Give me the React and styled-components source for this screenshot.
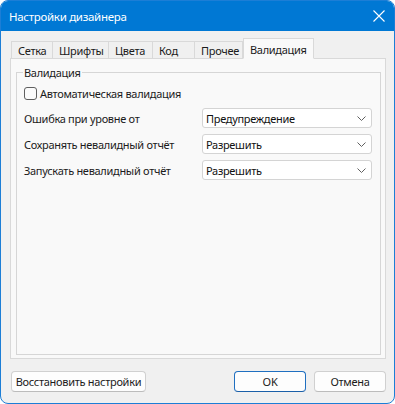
import React from 'react';
import styled, { createGlobalStyle } from 'styled-components';

const GlobalStyle = createGlobalStyle`
  html, body {
    margin: 0;
    padding: 0;
    background: #ffffff;
  }
  body {
    font-family: "Noto Sans", "Open Sans", sans-serif;
    font-size: 11px;
    letter-spacing: -0.3px;
    color: #1b1b1b;
  }
`;

const Window = styled.div`
  box-sizing: border-box;
  width: 395px;
  height: 404px;
  border: 1px solid #1c7ed6;
  border-radius: 8px;
  overflow: hidden;
  background: #f0f0f0;
  display: flex;
  flex-direction: column;
`;

const TitleBar = styled.div`
  height: 30px;
  flex: none;
  background: #0078d4;
  color: #ffffff;
  display: flex;
  align-items: center;
  justify-content: space-between;
  padding: 0 9px 0 8px;
  font-size: 11.5px;
`;

const CloseIcon = () => (
  <svg width="12" height="12" viewBox="0 0 12 12">
    <path d="M0.5 0.5 L11.5 11.5 M11.5 0.5 L0.5 11.5" stroke="#ffffff" strokeWidth="1.1" fill="none" />
  </svg>
);

const Body = styled.div`
  flex: 1;
  display: flex;
  flex-direction: column;
  padding: 8px 8px 0 9px;
`;

const TabStrip = styled.div`
  display: flex;
  align-items: flex-end;
  height: 20px;
  padding-left: 1px;
  position: relative;
  z-index: 1;
  margin-bottom: -1px;
`;

const Tab = styled.div`
  box-sizing: border-box;
  width: ${p => p.w}px;
  height: ${p => (p.active ? 21 : 18)}px;
  margin: ${p => (p.active ? '0 -2px 0 0' : '0')};
  padding-left: 6px;
  padding-top: ${p => (p.active ? 2 : 0)}px;
  display: flex;
  align-items: center;
  background: ${p => (p.active ? '#f9f9f9' : '#f0f0f0')};
  border: 1px solid #d9d9d9;
  border-left-width: ${p => (p.first || p.active ? 1 : 0)}px;
  border-bottom-color: ${p => (p.active ? '#f9f9f9' : '#d9d9d9')};
  white-space: nowrap;
`;

const Panel = styled.div`
  box-sizing: border-box;
  height: 301px;
  background: #f9f9f9;
  border: 1px solid #d9d9d9;
  padding: 6px 4px 3px 5px;
  display: flex;
`;

const Group = styled.fieldset`
  flex: 1;
  margin: 0;
  border: 1px solid #d6d6d6;
  padding: 3px 8px 0 7px;
  display: flex;
  flex-direction: column;
  min-width: 0;
`;

const Legend = styled.legend`
  padding: 0 1px;
  margin-left: -1px;
`;

const CheckRow = styled.label`
  display: flex;
  align-items: center;
  gap: 3px;
  height: 20px;
  margin-bottom: 5px;
`;

const Box = styled.span`
  box-sizing: border-box;
  width: 13px;
  height: 13px;
  border: 1px solid #5f5f5f;
  border-radius: 3px;
  background: #fbfbfb;
`;

const Row = styled.div`
  display: flex;
  align-items: center;
  justify-content: space-between;
  height: 20px;
  margin-bottom: 6px;
`;

const Select = styled.div`
  box-sizing: border-box;
  width: 170px;
  height: 20px;
  background: #ffffff;
  border: 1px solid #d4d4d4;
  border-radius: 3px;
  display: flex;
  align-items: center;
  justify-content: space-between;
  padding: 0 5px 0 3px;
  color: #111;
`;

const Chevron = () => (
  <svg width="9" height="5" viewBox="0 0 9 5">
    <path d="M0.5 0.5 L4.5 4.5 L8.5 0.5" stroke="#606060" strokeWidth="1" fill="none" />
  </svg>
);

const Footer = styled.div`
  display: flex;
  align-items: center;
  padding: 12px 0 0 1px;
`;

const Button = styled.button`
  box-sizing: border-box;
  height: 21px;
  width: ${p => p.w}px;
  padding: 0;
  font-family: inherit;
  font-size: 11px;
  letter-spacing: -0.3px;
  white-space: nowrap;
  color: #1b1b1b;
  background: #fdfdfd;
  border: 1px solid ${p => (p.primary ? '#1f6fc0' : '#d0d0d0')};
  border-bottom-color: ${p => (p.primary ? '#1a5fa8' : '#bcbcbc')};
  border-radius: 4px;
  margin-left: ${p => p.ml || 0}px;
`;

const Spacer = styled.div`
  flex: 1;
`;

const tabs = [
  { t: 'Сетка', w: 42 },
  { t: 'Шрифты', w: 56 },
  { t: 'Цвета', w: 44 },
  { t: 'Код', w: 42 },
  { t: 'Прочее', w: 48 },
  { t: 'Валидация', w: 71, active: true },
];

const rows = [
  ['Ошибка при уровне от', 'Предупреждение'],
  ['Сохранять невалидный отчёт', 'Разрешить'],
  ['Запускать невалидный отчёт', 'Разрешить'],
];

export default function App() {
  return (
    <>
      <GlobalStyle />
      <Window>
        <TitleBar>
          <span>Настройки дизайнера</span>
          <CloseIcon />
        </TitleBar>
        <Body>
          <TabStrip>
            {tabs.map((tab, i) => (
              <Tab key={tab.t} w={tab.w} active={tab.active} first={i === 0}>
                {tab.t}
              </Tab>
            ))}
          </TabStrip>
          <Panel>
            <Group>
              <Legend>Валидация</Legend>
              <CheckRow>
                <Box />
                Автоматическая валидация
              </CheckRow>
              {rows.map(([label, value]) => (
                <Row key={label}>
                  <span>{label}</span>
                  <Select>
                    <span>{value}</span>
                    <Chevron />
                  </Select>
                </Row>
              ))}
            </Group>
          </Panel>
          <Footer>
            <Button w={135}>Восстановить настройки</Button>
            <Spacer />
            <Button primary w={72}>OK</Button>
            <Button w={72} ml={8}>Отмена</Button>
          </Footer>
        </Body>
      </Window>
    </>
  );
}
